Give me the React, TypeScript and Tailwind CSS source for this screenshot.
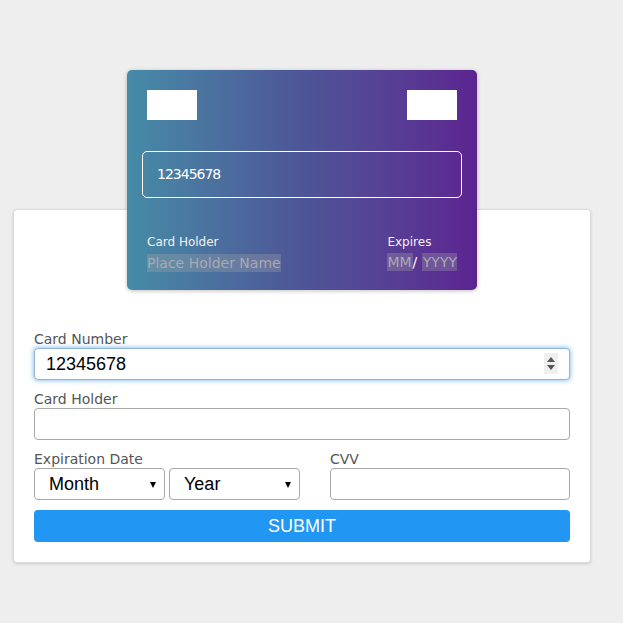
import React from 'react'

const labelFont = { fontFamily: '"DejaVu Sans", "Noto Sans", sans-serif' }

const Label: React.FC<{ children: React.ReactNode }> = ({ children }) => (
  <label
    className="block h-5 pt-[3px] text-[14px] leading-[17px] text-[#555]"
    style={labelFont}
  >
    {children}
  </label>
)

const Select: React.FC<{ text: string }> = ({ text }) => (
  <div className="relative h-8 w-[131px] rounded border border-[#a9a9a9] bg-white">
    <span className="absolute left-[14px] top-[4px] text-[18px] leading-[22px] text-black">
      {text}
    </span>
    <span className="absolute right-[8px] top-[13px] h-0 w-0 border-x-[3.5px] border-t-[6px] border-x-transparent border-t-black" />
  </div>
)

const CardPreview: React.FC = () => (
  <div
    className="absolute left-[113px] top-[-140px] h-[220px] w-[350px] rounded-[5px] bg-linear-to-r from-[#458ba6] via-[#4d5597] to-[#5c2391] shadow-[0_1px_4px_rgba(0,0,0,0.25)]"
    style={labelFont}
  >
    <div className="flex justify-between px-5 pt-5">
      <div className="h-[30px] w-[50px] bg-white" />
      <div className="h-[30px] w-[50px] bg-white" />
    </div>
    <div className="mx-[15px] mt-[31px] flex h-[47px] items-center rounded-[5px] border border-white px-[14px] text-[14px] tracking-[-1px] text-white">
      12345678
    </div>
    <div className="mt-[36px] flex justify-between px-5">
      <div>
        <div className="text-[12px] leading-[17px] text-[#f2f2f2]">Card Holder</div>
        <div className="mt-[2px] inline-block bg-[rgba(170,170,170,0.3)] text-[14px] leading-[18px] text-[#a9a9b4]">
          Place Holder Name
        </div>
      </div>
      <div>
        <div className="text-[12px] leading-[17px] text-[#f2f2f2]">Expires</div>
        <div className="mt-[2px] flex text-[14px] leading-[18px] text-[#a9a9b4]">
          <span className="bg-[rgba(170,170,170,0.3)] pr-[1px]">MM</span>
          <span className="text-white">/&nbsp;</span>
          <span className="bg-[rgba(170,170,170,0.3)] pl-[1px]">YYYY</span>
        </div>
      </div>
    </div>
  </div>
)

export default function App() {
  return (
    <div
      className="min-h-[623px] bg-[#eeeeee] pt-[209px]"
      style={{ fontFamily: '"Liberation Sans", Arial, sans-serif' }}
    >
      <div className="relative ml-[13px] w-[578px] rounded border border-[#dcdcdc] bg-white px-5 pb-5 pt-[118px] shadow-[0_1px_3px_rgba(0,0,0,0.15)]">
        <CardPreview />
        <form className="flex flex-col">
          <Label>Card Number</Label>
          <div className="relative h-8 rounded border border-[#8fb6d8] bg-white shadow-[0_0_4px_1px_rgba(80,160,230,0.6)]">
            <input
              readOnly
              value="12345678"
              className="h-full w-full rounded bg-transparent px-[11px] text-[18px] text-black outline-none"
            />
            <div className="absolute right-[11px] top-[4px] flex h-[21px] w-[14px] flex-col items-center justify-center gap-[3px] bg-[#efefef]">
              <span className="h-0 w-0 border-x-[4px] border-b-[5px] border-x-transparent border-b-[#555]" />
              <span className="h-0 w-0 border-x-[4px] border-t-[5px] border-x-transparent border-t-[#555]" />
            </div>
          </div>

          <div className="mt-2">
            <Label>Card Holder</Label>
            <input className="h-8 w-full rounded border border-[#a9a9a9] px-[11px] text-[18px] outline-none" />
          </div>

          <div className="mt-2 flex">
            <div className="w-[296px]">
              <Label>Expiration Date</Label>
              <div className="flex gap-1">
                <Select text="Month" />
                <Select text="Year" />
              </div>
            </div>
            <div className="flex-1">
              <Label>CVV</Label>
              <input className="h-8 w-full rounded border border-[#a9a9a9] px-[11px] text-[18px] outline-none" />
            </div>
          </div>

          <button
            type="button"
            className="mt-[10px] h-8 w-full rounded bg-[#2196f3] text-[18px] text-white"
          >
            SUBMIT
          </button>
        </form>
      </div>
    </div>
  )
}
